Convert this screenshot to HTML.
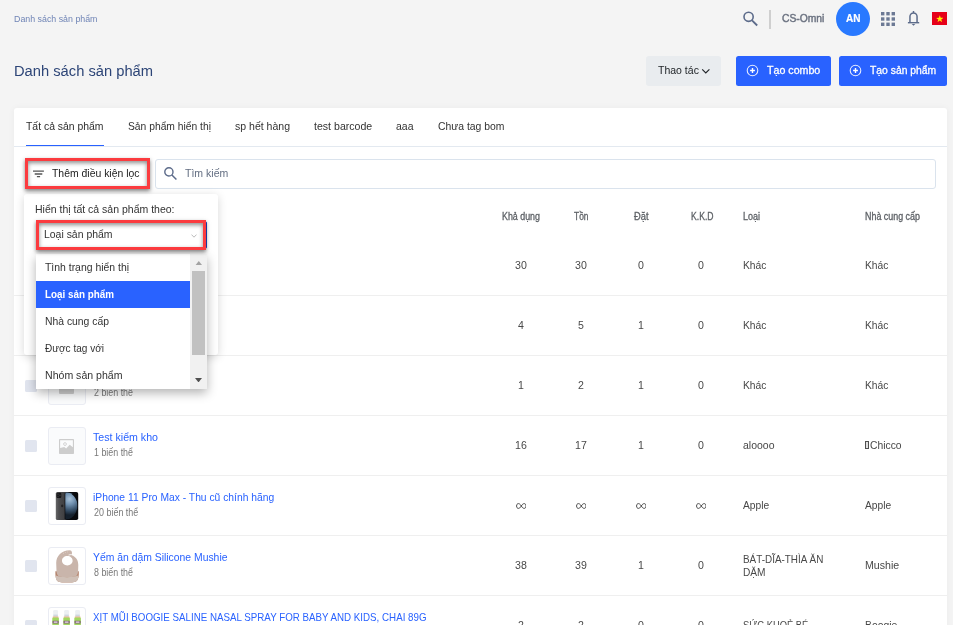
<!DOCTYPE html>
<html lang="vi">
<head>
<meta charset="utf-8">
<title>Danh sách sản phẩm</title>
<style>
*{box-sizing:border-box;margin:0;padding:0}
html,body{width:953px;height:625px;overflow:hidden}
body{background:#f4f4f4;font-family:"Liberation Sans",sans-serif;position:relative}
.a{position:absolute}
.t{position:absolute;white-space:pre;transform-origin:0 50%;font-family:"Liberation Sans",sans-serif}
.card{left:14px;top:108px;width:933px;height:540px;background:#fff;border-radius:3px;box-shadow:0 0 7px rgba(0,0,0,.045)}
.hl{left:14px;width:933px;height:1px;background:#efefef}
.cb{left:25px;width:12px;height:12px;background:#e1e5ef;border-radius:1.5px}
.th{left:48px;width:38px;height:38px;border:1px solid #eaecf3;border-radius:3px;background:#fff;overflow:hidden}
.btn{top:56px;height:30px;border-radius:2.5px;background:#2962ff}
.red{border:3px solid #fb3b3f;box-shadow:0 2px 4px rgba(0,0,0,.5), inset 0 2px 4px rgba(0,0,0,.45)}
</style>
</head>
<body>
<div id="w" style="position:absolute;left:0;top:0;width:953px;height:625px;will-change:transform">
<!-- top bar icons -->
<svg class="a" style="left:742px;top:10px" width="17" height="17" viewBox="0 0 17 17"><circle cx="6.6" cy="6.8" r="4.6" fill="none" stroke="#5c6b8a" stroke-width="1.6"/><path d="M10 10.3 L15.2 15.5" stroke="#5c6b8a" stroke-width="1.8" fill="none"/></svg>
<div class="a" style="left:769.2px;top:10px;width:1.5px;height:19px;background:#cfcfcf"></div>
<div class="a" style="left:836px;top:1.5px;width:34px;height:34px;border-radius:50%;background:#2979ff"></div>
<svg class="a" style="left:881px;top:12px" width="14" height="14" viewBox="0 0 14 14" fill="#6c7994"><rect x="0.0" y="0.0" width="3.4" height="3.4"/><rect x="5.3" y="0.0" width="3.4" height="3.4"/><rect x="10.6" y="0.0" width="3.4" height="3.4"/><rect x="0.0" y="5.3" width="3.4" height="3.4"/><rect x="5.3" y="5.3" width="3.4" height="3.4"/><rect x="10.6" y="5.3" width="3.4" height="3.4"/><rect x="0.0" y="10.6" width="3.4" height="3.4"/><rect x="5.3" y="10.6" width="3.4" height="3.4"/><rect x="10.6" y="10.6" width="3.4" height="3.4"/></svg>
<svg class="a" style="left:907px;top:10px" width="14" height="17" viewBox="0 0 14 17"><path d="M6.5 1.1 V3.2 M2.95 12.4 V6.6 A3.55 3.55 0 0 1 10.05 6.6 V12.4" fill="none" stroke="#5c6b8a" stroke-width="1.5"/><path d="M0.9 12.7 H12.2" fill="none" stroke="#5c6b8a" stroke-width="1.4"/><path d="M4.7 14 H8.3 L6.5 15.8 Z" fill="#5c6b8a"/></svg>
<div class="a" style="left:932px;top:12.2px;width:15px;height:12.4px;background:#e60019"></div>
<svg class="a" style="left:935.6px;top:14.6px" width="7.6" height="7.6" viewBox="0 0 10 10"><polygon points="5,0.4 6.2,3.7 9.8,3.8 6.9,6 8,9.4 5,7.4 2,9.4 3.1,6 0.2,3.8 3.8,3.7" fill="#ffee00"/></svg>

<!-- action buttons -->
<div class="a" style="left:646px;top:56px;width:75px;height:30px;border-radius:3px;background:#e9ecef"></div>
<svg class="a" style="left:701px;top:68px" width="10" height="7" viewBox="0 0 10 7"><path d="M1.2 1.4 L4.8 5 L8.4 1.4" fill="none" stroke="#212529" stroke-width="1.15"/></svg>
<div class="a btn" style="left:736px;width:95px"></div>
<div class="a btn" style="left:839px;width:108.3px"></div>
<svg class="a" style="left:746.2px;top:64.2px" width="13" height="13" viewBox="0 0 13 13"><circle cx="6.5" cy="6.5" r="5.3" fill="none" stroke="#e9efff" stroke-width="1.05"/><path d="M6.5 4.1 V8.9 M4.1 6.5 H8.9" stroke="#fff" stroke-width="1.4"/></svg>
<svg class="a" style="left:849.2px;top:64.2px" width="13" height="13" viewBox="0 0 13 13"><circle cx="6.5" cy="6.5" r="5.3" fill="none" stroke="#e9efff" stroke-width="1.05"/><path d="M6.5 4.1 V8.9 M4.1 6.5 H8.9" stroke="#fff" stroke-width="1.4"/></svg>

<!-- card -->
<div class="a card"></div>
<div class="a" style="left:14px;top:146px;width:933px;height:1px;background:#e3e9f0"></div>
<div class="a" style="left:26px;top:144.6px;width:78px;height:1.6px;background:#2962ff"></div>
<div class="a" style="left:155px;top:159px;width:781px;height:30px;border:1px solid #dae3ed;border-radius:3px;background:#fff"></div>
<svg class="a" style="left:163px;top:165.6px" width="15" height="15" viewBox="0 0 15 15"><circle cx="5.9" cy="5.9" r="4.1" fill="none" stroke="#5c6b8a" stroke-width="1.4"/><path d="M8.9 9 L13.4 13.5" stroke="#5c6b8a" stroke-width="1.5" fill="none"/></svg>

<!-- row lines -->
<div class="a hl" style="top:295px"></div>
<div class="a hl" style="top:355px"></div>
<div class="a hl" style="top:415px"></div>
<div class="a hl" style="top:475px"></div>
<div class="a hl" style="top:535px"></div>
<div class="a hl" style="top:595px"></div>

<!-- checkboxes -->
<div class="a cb" style="top:260px"></div>
<div class="a cb" style="top:320px"></div>
<div class="a cb" style="top:380px"></div>
<div class="a cb" style="top:440px"></div>
<div class="a cb" style="top:500px"></div>
<div class="a cb" style="top:560px"></div>
<div class="a cb" style="top:620px"></div>

<!-- thumbnails -->
<div class="a th" style="top:367px;background:#fafbfc"><svg class="a" style="left:10px;top:11px" width="15" height="15" viewBox="0 0 16 16"><rect x="0" y="0" width="16" height="16" rx="1" fill="#cdcdcd"/></svg></div>
<div class="a th" style="top:427px;background:#fafbfc"><svg class="a" style="left:10px;top:11px" width="15" height="15" viewBox="0 0 16 16"><rect x="0" y="0" width="16" height="16" rx="0.8" fill="#cdcdcd"/><path d="M1.2 1.2 H14.8 V8.8 L11.4 6 L7.6 10 L5.6 8.6 L1.2 9.6 Z" fill="#fafbfc"/><circle cx="6.4" cy="5.4" r="1.5" fill="#fafbfc" stroke="#cdcdcd" stroke-width="0.9"/></svg></div>
<div class="a th" style="top:487px"><svg class="a" style="left:0;top:0" width="36" height="36" viewBox="0 0 36 36"><defs><radialGradient id="pl" gradientUnits="userSpaceOnUse" cx="20.5" cy="11" r="16"><stop offset="0" stop-color="#a9c2d9"/><stop offset="0.35" stop-color="#6f8fae"/><stop offset="0.7" stop-color="#38516a"/><stop offset="1" stop-color="#15202c"/></radialGradient><linearGradient id="bk" x1="0" x2="1"><stop offset="0" stop-color="#666667"/><stop offset="0.3" stop-color="#4c4c4e"/><stop offset="0.8" stop-color="#404042"/><stop offset="1" stop-color="#2e2e30"/></linearGradient><clipPath id="fr"><rect x="16.3" y="4.5" width="12.4" height="27" rx="1.4"/></clipPath></defs><rect x="6.8" y="3.9" width="10.5" height="28.2" rx="1.6" fill="url(#bk)"/><rect x="15.7" y="3.9" width="13.5" height="28.2" rx="1.8" fill="#08090c"/><ellipse cx="16" cy="17.8" rx="12.4" ry="14" fill="url(#pl)" clip-path="url(#fr)"/><rect x="7.5" y="4.7" width="4.8" height="5.2" rx="1.2" fill="#151517"/><circle cx="9" cy="6.2" r="0.9" fill="#2d2d30"/><circle cx="9" cy="8.4" r="0.9" fill="#2d2d30"/><circle cx="11" cy="7.3" r="0.9" fill="#2d2d30"/><ellipse cx="13.2" cy="17.9" rx="1.1" ry="1.3" fill="#222224"/></svg></div>
<div class="a th" style="top:547px"><svg class="a" style="left:0;top:0" width="36" height="36" viewBox="0 0 36 36"><path d="M6.4 23.2 C6.2 28 6.8 32 9 33.4 C13 35 23 35 27 33.4 C29.4 32 30 28 29.8 23.2 Z" fill="#b5846d"/><path fill-rule="evenodd" fill="#c9b5ab" d="M20.8 2.2 C12.5 2.4 7.2 7.8 7.2 15 L7.5 23.5 C8 27 9 28 10 28.4 C14 29.4 22 29.4 26.4 28.4 C27.6 28 28.6 27 29.1 23.5 L29.3 17 C29.3 12 26.8 8.6 22.6 7.2 C23.4 5.4 23.2 2.3 20.8 2.2 Z M18.3 8.1 C15.2 8.1 13 10.2 13 12.8 C13 15.4 15.2 17.4 18.3 17.4 C21.4 17.4 23.6 15.4 23.6 12.8 C23.6 10.2 21.4 8.1 18.3 8.1 Z"/><path d="M19.6 7 L22.8 6.4" stroke="#fff" stroke-width="0.8" fill="none"/><path d="M7 27.6 C12 29.8 24 29.8 29.2 27.6 C29.6 30.5 28.8 32.6 27 33.4 C23 35 13 35 9 33.4 C7.2 32.6 6.6 30.5 7 27.6 Z" fill="#cfc0b7"/><circle cx="14.6" cy="5.2" r="0.45" fill="#e9dfd9"/><circle cx="16.6" cy="4.4" r="0.45" fill="#e9dfd9"/><circle cx="18.6" cy="3.9" r="0.45" fill="#e9dfd9"/></svg></div>
<div class="a th" style="top:607px"><svg class="a" style="left:0;top:0" width="36" height="36" viewBox="0 0 36 36"><g id="bt"><rect x="4.2" y="2" width="4.8" height="7" rx="1.3" fill="#edf0f3"/><rect x="4.4" y="6.6" width="4.4" height="2" fill="#cfd8e0"/><rect x="3.8" y="8.6" width="5.6" height="1.1" fill="#eda27c"/><rect x="3.3" y="9.6" width="6.6" height="14" rx="0.8" fill="#a2d860"/><rect x="3.6" y="12.8" width="6" height="2.7" fill="#7a5872"/><rect x="4.7" y="13.5" width="3.8" height="1.2" fill="#f3eaf3"/></g><use href="#bt" x="11"/><use href="#bt" x="22"/></svg></div>

<span class="t" style="left:14.00px;top:14.04px;font-size:9.4px;line-height:9.4px;color:#7085b6;transform:scaleX(0.9423);">Danh sách sản phẩm</span>
<span class="t" style="left:14.00px;top:62.93px;font-size:15.2px;line-height:15.2px;color:#2d4577;transform:scaleX(0.9684);">Danh sách sản phẩm</span>
<span class="t" style="left:782.00px;top:12.52px;font-size:11.2px;line-height:11.2px;color:#6b7280;transform:scaleX(0.9217);-webkit-text-stroke:0.45px #6b7280;">CS-Omni</span>
<span class="t" style="left:846.00px;top:12.52px;font-size:11.2px;line-height:11.2px;font-weight:700;color:#fff;transform:scaleX(0.8966);-webkit-text-stroke:0.2px #fff;">AN</span>
<span class="t" style="left:657.80px;top:64.52px;font-size:11.2px;line-height:11.2px;color:#212529;transform:scaleX(0.9392);">Thao tác</span>
<span class="t" style="left:767.00px;top:64.56px;font-size:10.8px;line-height:10.8px;color:#fff;transform:scaleX(0.9868);-webkit-text-stroke:0.3px #fff;">Tạo combo</span>
<span class="t" style="left:870.00px;top:64.56px;font-size:10.8px;line-height:10.8px;color:#fff;transform:scaleX(0.9590);-webkit-text-stroke:0.3px #fff;">Tạo sản phẩm</span>
<span class="t" style="left:26.00px;top:121.65px;font-size:10.46px;line-height:10.46px;color:#2e2e2e;transform:scaleX(0.9954);">Tất cả sản phẩm</span>
<span class="t" style="left:128.00px;top:121.65px;font-size:10.46px;line-height:10.46px;color:#333;transform:scaleX(0.9850);">Sản phẩm hiển thị</span>
<span class="t" style="left:235.00px;top:121.65px;font-size:10.46px;line-height:10.46px;color:#333;transform:scaleX(1.0066);">sp hết hàng</span>
<span class="t" style="left:313.75px;top:121.65px;font-size:10.46px;line-height:10.46px;color:#333;transform:scaleX(1.0125);">test barcode</span>
<span class="t" style="left:396.00px;top:121.65px;font-size:10.46px;line-height:10.46px;color:#333;transform:scaleX(1.0027);">aaa</span>
<span class="t" style="left:437.50px;top:121.65px;font-size:10.46px;line-height:10.46px;color:#333;transform:scaleX(0.9946);">Chưa tag bom</span>
<span class="t" style="left:52.00px;top:169.15px;font-size:10.46px;line-height:10.46px;color:#222;transform:scaleX(0.9973);">Thêm điều kiện lọc</span>
<span class="t" style="left:184.80px;top:169.15px;font-size:10.46px;line-height:10.46px;color:#636e82;transform:scaleX(1.0073);">Tìm kiếm</span>
<span class="t" style="left:502.00px;top:212.34px;font-size:10px;line-height:10px;color:#5e6267;transform:scaleX(0.8873);-webkit-text-stroke:0.3px #5e6267;">Khả dụng</span>
<span class="t" style="left:574.00px;top:212.34px;font-size:10px;line-height:10px;color:#5e6267;transform:scaleX(0.8413);-webkit-text-stroke:0.3px #5e6267;">Tồn</span>
<span class="t" style="left:634.00px;top:212.34px;font-size:10px;line-height:10px;color:#5e6267;transform:scaleX(0.9317);-webkit-text-stroke:0.3px #5e6267;">Đặt</span>
<span class="t" style="left:690.50px;top:212.34px;font-size:10px;line-height:10px;color:#5e6267;transform:scaleX(0.8612);-webkit-text-stroke:0.3px #5e6267;">K.K.D</span>
<span class="t" style="left:742.60px;top:212.34px;font-size:10px;line-height:10px;color:#5e6267;transform:scaleX(0.8992);-webkit-text-stroke:0.3px #5e6267;">Loại</span>
<span class="t" style="left:865.00px;top:212.34px;font-size:10px;line-height:10px;color:#5e6267;transform:scaleX(0.8911);-webkit-text-stroke:0.3px #5e6267;">Nhà cung cấp</span>
<span class="t" style="left:515.10px;top:261.15px;font-size:10.46px;line-height:10.46px;color:#484848;transform:scaleX(1.0137);">30</span>
<span class="t" style="left:575.10px;top:261.15px;font-size:10.46px;line-height:10.46px;color:#484848;transform:scaleX(1.0137);">30</span>
<span class="t" style="left:638.05px;top:261.15px;font-size:10.46px;line-height:10.46px;color:#484848;transform:scaleX(1.0123);">0</span>
<span class="t" style="left:698.05px;top:261.15px;font-size:10.46px;line-height:10.46px;color:#484848;transform:scaleX(1.0123);">0</span>
<span class="t" style="left:742.70px;top:261.15px;font-size:10.46px;line-height:10.46px;color:#484848;transform:scaleX(0.9820);">Khác</span>
<span class="t" style="left:864.90px;top:261.15px;font-size:10.46px;line-height:10.46px;color:#484848;transform:scaleX(0.9820);">Khác</span>
<span class="t" style="left:518.05px;top:321.15px;font-size:10.46px;line-height:10.46px;color:#484848;transform:scaleX(1.0123);">4</span>
<span class="t" style="left:578.05px;top:321.15px;font-size:10.46px;line-height:10.46px;color:#484848;transform:scaleX(1.0123);">5</span>
<span class="t" style="left:638.05px;top:321.15px;font-size:10.46px;line-height:10.46px;color:#484848;transform:scaleX(1.0123);">1</span>
<span class="t" style="left:698.05px;top:321.15px;font-size:10.46px;line-height:10.46px;color:#484848;transform:scaleX(1.0123);">0</span>
<span class="t" style="left:742.70px;top:321.15px;font-size:10.46px;line-height:10.46px;color:#484848;transform:scaleX(0.9820);">Khác</span>
<span class="t" style="left:864.90px;top:321.15px;font-size:10.46px;line-height:10.46px;color:#484848;transform:scaleX(0.9820);">Khác</span>
<span class="t" style="left:518.05px;top:381.15px;font-size:10.46px;line-height:10.46px;color:#484848;transform:scaleX(1.0123);">1</span>
<span class="t" style="left:578.05px;top:381.15px;font-size:10.46px;line-height:10.46px;color:#484848;transform:scaleX(1.0123);">2</span>
<span class="t" style="left:638.05px;top:381.15px;font-size:10.46px;line-height:10.46px;color:#484848;transform:scaleX(1.0123);">1</span>
<span class="t" style="left:698.05px;top:381.15px;font-size:10.46px;line-height:10.46px;color:#484848;transform:scaleX(1.0123);">0</span>
<span class="t" style="left:742.70px;top:381.15px;font-size:10.46px;line-height:10.46px;color:#484848;transform:scaleX(0.9820);">Khác</span>
<span class="t" style="left:864.90px;top:381.15px;font-size:10.46px;line-height:10.46px;color:#484848;transform:scaleX(0.9820);">Khác</span>
<span class="t" style="left:515.10px;top:441.15px;font-size:10.46px;line-height:10.46px;color:#484848;transform:scaleX(1.0137);">16</span>
<span class="t" style="left:575.10px;top:441.15px;font-size:10.46px;line-height:10.46px;color:#484848;transform:scaleX(1.0137);">17</span>
<span class="t" style="left:638.05px;top:441.15px;font-size:10.46px;line-height:10.46px;color:#484848;transform:scaleX(1.0123);">1</span>
<span class="t" style="left:698.05px;top:441.15px;font-size:10.46px;line-height:10.46px;color:#484848;transform:scaleX(1.0123);">0</span>
<span class="t" style="left:742.70px;top:441.15px;font-size:10.46px;line-height:10.46px;color:#484848;transform:scaleX(1.0035);">aloooo</span>
<span class="t" style="left:742.70px;top:501.15px;font-size:10.46px;line-height:10.46px;color:#484848;transform:scaleX(0.9794);">Apple</span>
<span class="t" style="left:864.90px;top:501.15px;font-size:10.46px;line-height:10.46px;color:#484848;transform:scaleX(0.9794);">Apple</span>
<span class="t" style="left:515.10px;top:561.15px;font-size:10.46px;line-height:10.46px;color:#484848;transform:scaleX(1.0137);">38</span>
<span class="t" style="left:575.10px;top:561.15px;font-size:10.46px;line-height:10.46px;color:#484848;transform:scaleX(1.0137);">39</span>
<span class="t" style="left:638.05px;top:561.15px;font-size:10.46px;line-height:10.46px;color:#484848;transform:scaleX(1.0123);">1</span>
<span class="t" style="left:698.05px;top:561.15px;font-size:10.46px;line-height:10.46px;color:#484848;transform:scaleX(1.0123);">0</span>
<span class="t" style="left:864.90px;top:561.15px;font-size:10.46px;line-height:10.46px;color:#484848;transform:scaleX(1.0147);">Mushie</span>
<span class="t" style="left:518.05px;top:621.15px;font-size:10.46px;line-height:10.46px;color:#484848;transform:scaleX(1.0123);">2</span>
<span class="t" style="left:578.05px;top:621.15px;font-size:10.46px;line-height:10.46px;color:#484848;transform:scaleX(1.0123);">2</span>
<span class="t" style="left:638.05px;top:621.15px;font-size:10.46px;line-height:10.46px;color:#484848;transform:scaleX(1.0123);">0</span>
<span class="t" style="left:698.05px;top:621.15px;font-size:10.46px;line-height:10.46px;color:#484848;transform:scaleX(1.0123);">0</span>
<span class="t" style="left:742.70px;top:621.15px;font-size:10.46px;line-height:10.46px;color:#484848;transform:scaleX(0.8966);">SỨC KHOẺ BÉ</span>
<span class="t" style="left:864.90px;top:621.15px;font-size:10.46px;line-height:10.46px;color:#484848;transform:scaleX(0.9889);">Boogie</span>
<span class="t" style="left:870.20px;top:441.15px;font-size:10.46px;line-height:10.46px;color:#484848;transform:scaleX(0.9889);">Chicco</span>
<span class="t" style="left:742.70px;top:554.95px;font-size:10.46px;line-height:10.46px;color:#484848;transform:scaleX(0.9468);">BÁT-DĨA-THÌA ĂN</span>
<span class="t" style="left:742.70px;top:568.15px;font-size:10.46px;line-height:10.46px;color:#484848;transform:scaleX(0.9727);">DẶM</span>
<span class="t" style="left:94.00px;top:388.37px;font-size:10.2px;line-height:10.2px;color:#787878;transform:scaleX(0.8715);">2 biến thể</span>
<span class="t" style="left:93.40px;top:433.15px;font-size:10.46px;line-height:10.46px;color:#2962ff;transform:scaleX(1.0171);">Test kiểm kho</span>
<span class="t" style="left:94.00px;top:448.37px;font-size:10.2px;line-height:10.2px;color:#787878;transform:scaleX(0.8715);">1 biến thể</span>
<span class="t" style="left:93.40px;top:493.15px;font-size:10.46px;line-height:10.46px;color:#2962ff;transform:scaleX(0.9857);">iPhone 11 Pro Max - Thu cũ chính hãng</span>
<span class="t" style="left:94.00px;top:508.37px;font-size:10.2px;line-height:10.2px;color:#787878;transform:scaleX(0.8786);">20 biến thể</span>
<span class="t" style="left:93.40px;top:553.15px;font-size:10.46px;line-height:10.46px;color:#2962ff;transform:scaleX(0.9934);">Yếm ăn dặm Silicone Mushie</span>
<span class="t" style="left:94.00px;top:568.37px;font-size:10.2px;line-height:10.2px;color:#787878;transform:scaleX(0.8715);">8 biến thể</span>
<span class="t" style="left:93.40px;top:613.15px;font-size:10.46px;line-height:10.46px;color:#2962ff;transform:scaleX(0.9335);">XỊT MŨI BOOGIE SALINE NASAL SPRAY FOR BABY AND KIDS, CHAI 89G</span>
<!-- infinity glyphs -->
<svg width="0" height="0" style="position:absolute"><defs><path id="inf" d="M5.5 3 C4.4 1.2 3.4 0.6 2.5 0.6 C1.3 0.6 0.6 1.6 0.6 3 C0.6 4.4 1.3 5.4 2.5 5.4 C3.4 5.4 4.4 4.8 5.5 3 C6.6 1.2 7.6 0.6 8.5 0.6 C9.7 0.6 10.4 1.6 10.4 3 C10.4 4.4 9.7 5.4 8.5 5.4 C7.6 5.4 6.6 4.8 5.5 3 Z" fill="none" stroke="#484848" stroke-width="1"/></defs></svg>
<svg class="a" style="left:515.7px;top:502.7px" width="10.6" height="6" viewBox="0 0 11 6" preserveAspectRatio="none"><use href="#inf"/></svg>
<svg class="a" style="left:575.7px;top:502.7px" width="10.6" height="6" viewBox="0 0 11 6" preserveAspectRatio="none"><use href="#inf"/></svg>
<svg class="a" style="left:635.7px;top:502.7px" width="10.6" height="6" viewBox="0 0 11 6" preserveAspectRatio="none"><use href="#inf"/></svg>
<svg class="a" style="left:695.7px;top:502.7px" width="10.6" height="6" viewBox="0 0 11 6" preserveAspectRatio="none"><use href="#inf"/></svg>
<!-- missing glyph box before Chicco -->
<div class="a" style="left:865.1px;top:440.9px;width:3.9px;height:8px;border:0.8px solid #505050;background:#e0e0e0"></div>

<!-- filter button (red annotated) -->
<svg class="a" style="left:32px;top:169px" width="13" height="10" viewBox="0 0 13 10"><path d="M1 2.1 H11.9 M2.7 5 H10.3 M4.9 7.7 H8.1" stroke="#555" stroke-width="1.3" fill="none"/></svg>

<!-- popover panel -->
<div class="a" style="left:24px;top:193.5px;width:193.7px;height:161px;background:#fff;border-radius:3px;box-shadow:0 2px 10px rgba(0,0,0,.16)"></div>
<!-- select -->
<div class="a" style="left:38px;top:221px;width:169.4px;height:28px;background:#fff;border:1.5px solid #1848c8;border-radius:2px"></div>
<svg class="a" style="left:190.5px;top:233.5px" width="6" height="4" viewBox="0 0 6 4"><path d="M0.5 0.6 L3 3.2 L5.5 0.6" fill="none" stroke="#aaa" stroke-width="0.8"/></svg>
<!-- dropdown list -->
<div class="a" style="left:36px;top:254px;width:171px;height:134.5px;background:#fff;box-shadow:0 4px 10px rgba(0,0,0,.3)"></div>
<div class="a" style="left:36px;top:280.8px;width:154px;height:27.2px;background:#2962ff"></div>
<div class="a" style="left:190px;top:254px;width:17px;height:134.5px;background:#f1f1f1"></div>
<div class="a" style="left:192px;top:271px;width:13px;height:83.5px;background:#c1c1c1"></div>
<svg class="a" style="left:194.7px;top:260.8px" width="7.6" height="4.6" viewBox="0 0 7 4.4"><path d="M0 4.4 L3.5 0 L7 4.4 Z" fill="#a3a3a3"/></svg>
<svg class="a" style="left:195px;top:377.6px" width="7" height="4.4" viewBox="0 0 7 4.4"><path d="M0 0 L3.5 4.4 L7 0 Z" fill="#505050"/></svg>
<span class="t" style="left:35.00px;top:205.15px;font-size:10.46px;line-height:10.46px;color:#333;transform:scaleX(1.0044);">Hiển thị tất cả sản phẩm theo:</span>
<span class="t" style="left:44.00px;top:230.15px;font-size:10.46px;line-height:10.46px;color:#333;transform:scaleX(0.9989);">Loại sản phẩm</span>
<span class="t" style="left:44.50px;top:263.15px;font-size:10.46px;line-height:10.46px;color:#333;transform:scaleX(0.9968);">Tình trạng hiển thị</span>
<span class="t" style="left:44.50px;top:290.15px;font-size:10.46px;line-height:10.46px;font-weight:700;color:#fff;transform:scaleX(0.9428);">Loại sản phẩm</span>
<span class="t" style="left:44.50px;top:317.15px;font-size:10.46px;line-height:10.46px;color:#333;transform:scaleX(0.9920);">Nhà cung cấp</span>
<span class="t" style="left:44.50px;top:344.15px;font-size:10.46px;line-height:10.46px;color:#333;transform:scaleX(0.9613);">Được tag với</span>
<span class="t" style="left:44.50px;top:371.15px;font-size:10.46px;line-height:10.46px;color:#333;transform:scaleX(1.0104);">Nhóm sản phẩm</span>
<!-- red annotation frames -->
<div class="a red" style="left:25px;top:158px;width:125px;height:31px"></div>
<div class="a red" style="left:36px;top:220px;width:170px;height:30px"></div>
</div>
</body>
</html>
